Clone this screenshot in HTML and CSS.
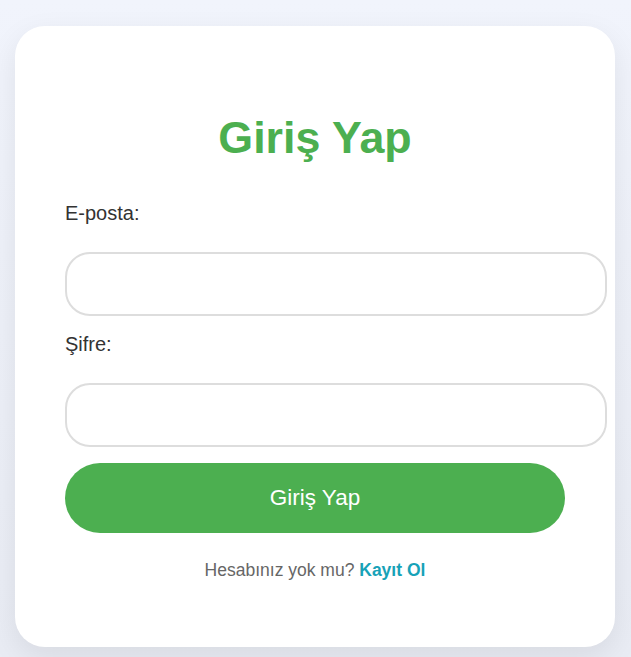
FILE: index.html
```html
<!DOCTYPE html>
<html lang="tr">
<head>
<meta charset="utf-8">
<title>Giriş Yap</title>
<link rel="stylesheet" href="styles.css">
</head>
<body>
<div class="card">
  <h1 class="title">Giriş Yap</h1>
  <form class="form">
    <label class="label" for="email">E-posta:</label>
    <input class="input" type="email" id="email">
    <label class="label" for="password">Şifre:</label>
    <input class="input" type="password" id="password">
    <button class="btn" type="button">Giriş Yap</button>
  </form>
  <p class="footer">Hesabınız yok mu? <a class="link" href="#">Kayıt Ol</a></p>
</div>
</body>
</html>
```
FILE: styles.css
```css
html, body {
  margin: 0;
  padding: 0;
}
body {
  font-family: "Liberation Sans", Arial, sans-serif;
  background: linear-gradient(180deg, #f1f4fc 0%, #e9ecf4 100%);
  min-height: 657px;
  padding: 26px 16px 0 15px;
  box-sizing: border-box;
}
.card {
  width: 600px;
  height: 621px;
  box-sizing: border-box;
  background: #fff;
  border-radius: 30px;
  padding: 50px;
  box-shadow: 0 10px 30px rgba(0, 0, 0, 0.08);
}
.title {
  margin: 36px 0 40px;
  text-align: center;
  color: #4caf50;
  font-size: 44.8px;
  font-weight: bold;
  line-height: 50px;
}
.form {
  display: flex;
  flex-direction: column;
  align-items: flex-start;
}
.label {
  display: block;
  font-size: 20px;
  line-height: 23px;
  color: #333;
  margin-bottom: 27px;
}
.input {
  width: 498px;
  box-sizing: content-box;
  padding: 0 20px;
  height: 60px;
  border: 2px solid #ddd;
  border-radius: 25px;
  margin: 0 0 17px;
  font-size: 16px;
  font-family: inherit;
  background: #fff;
  outline: none;
}
.btn {
  width: 500px;
  height: 70px;
  border: none;
  border-radius: 35px;
  background: #4caf50;
  color: #fff;
  font-size: 22.5px;
  font-family: inherit;
  margin-top: -1px;
  cursor: pointer;
}
.footer {
  margin: 27px 0 0;
  text-align: center;
  font-size: 17.5px;
  line-height: 20px;
  color: #666;
}
.link {
  color: #17a2b8;
  font-weight: bold;
  text-decoration: none;
}
```
